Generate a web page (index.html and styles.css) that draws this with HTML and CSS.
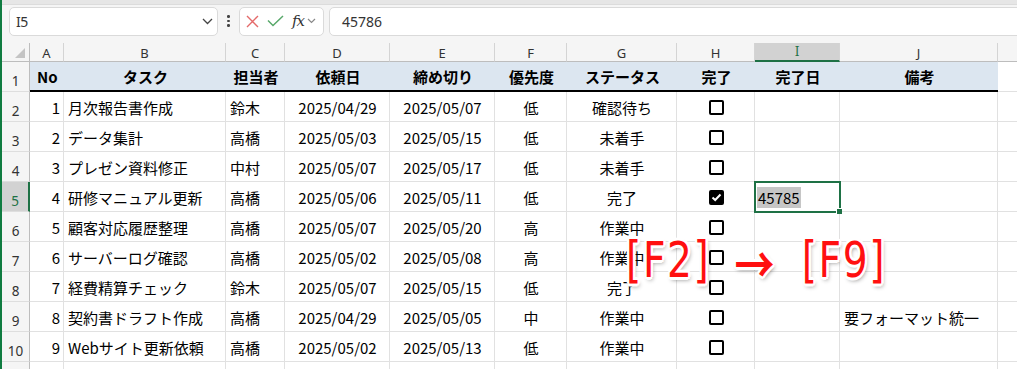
FILE: index.html
```html
<!DOCTYPE html>
<html lang="ja">
<head>
<meta charset="utf-8">
<link rel="stylesheet" href="styles.css">
</head>
<body>
<div class="app">
  <div class="ribbon-edge"></div>
  <div class="fbar">
    <div class="namebox"><span>I5</span>
      <svg class="chev" width="11" height="7" viewBox="0 0 11 7"><path d="M1 1 L5.5 5.5 L10 1" fill="none" stroke="#444" stroke-width="1.3"/></svg>
    </div>
    <div class="dots"><i></i><i></i><i></i></div>
    <div class="fbtns">
      <svg width="13" height="13" viewBox="0 0 13 13"><path d="M1 1 L12 12 M12 1 L1 12" stroke="#e46a6a" stroke-width="1.4" fill="none"/></svg>
      <svg width="17" height="12" viewBox="0 0 17 12"><path d="M1 5.5 L6 10.5 L16 1" stroke="#58a86a" stroke-width="1.5" fill="none"/></svg>
      <span class="fx">fx</span>
      <svg class="chev2" width="9" height="6" viewBox="0 0 9 6"><path d="M1 1 L4.5 4.5 L8 1" fill="none" stroke="#888" stroke-width="1.2"/></svg>
    </div>
    <div class="finput">45786</div>
  </div>

  <div class="sheet">
    <div class="ch corner"><span class="tri"></span></div>
    <div class="ch">A</div><div class="ch">B</div><div class="ch">C</div><div class="ch">D</div><div class="ch">E</div><div class="ch">F</div><div class="ch">G</div><div class="ch">H</div><div class="ch sel">I</div><div class="ch">J</div><div class="ch"></div>

    <div class="rh">1</div>
    <div class="c hd left">No</div><div class="c hd">タスク</div><div class="c hd">担当者</div><div class="c hd">依頼日</div><div class="c hd">締め切り</div><div class="c hd">優先度</div><div class="c hd">ステータス</div><div class="c hd">完了</div><div class="c hd">完了日</div><div class="c hd">備考</div><div class="c"></div>

    <div class="rh">2</div>
    <div class="c r">1</div><div class="c">月次報告書作成</div><div class="c">鈴木</div><div class="c m">2025/04/29</div><div class="c m">2025/05/07</div><div class="c m">低</div><div class="c m">確認待ち</div><div class="c m"><span class="cb"></span></div><div class="c"></div><div class="c"></div><div class="c"></div>

    <div class="rh">3</div>
    <div class="c r">2</div><div class="c">データ集計</div><div class="c">高橋</div><div class="c m">2025/05/03</div><div class="c m">2025/05/15</div><div class="c m">低</div><div class="c m">未着手</div><div class="c m"><span class="cb"></span></div><div class="c"></div><div class="c"></div><div class="c"></div>

    <div class="rh">4</div>
    <div class="c r">3</div><div class="c">プレゼン資料修正</div><div class="c">中村</div><div class="c m">2025/05/07</div><div class="c m">2025/05/17</div><div class="c m">低</div><div class="c m">未着手</div><div class="c m"><span class="cb"></span></div><div class="c"></div><div class="c"></div><div class="c"></div>

    <div class="rh sel">5</div>
    <div class="c r">4</div><div class="c">研修マニュアル更新</div><div class="c">高橋</div><div class="c m">2025/05/06</div><div class="c m">2025/05/11</div><div class="c m">低</div><div class="c m">完了</div><div class="c m"><span class="cb on"><svg width="11" height="9" viewBox="0 0 11 9"><path d="M1.5 4.5 L4.2 7 L9.5 1.5" fill="none" stroke="#fff" stroke-width="2"/></svg></span></div><div class="c active"><span class="hl">45785</span></div><div class="c"></div><div class="c"></div>

    <div class="rh">6</div>
    <div class="c r">5</div><div class="c">顧客対応履歴整理</div><div class="c">高橋</div><div class="c m">2025/05/07</div><div class="c m">2025/05/20</div><div class="c m">高</div><div class="c m">作業中</div><div class="c m"><span class="cb"></span></div><div class="c"></div><div class="c"></div><div class="c"></div>

    <div class="rh">7</div>
    <div class="c r">6</div><div class="c">サーバーログ確認</div><div class="c">高橋</div><div class="c m">2025/05/02</div><div class="c m">2025/05/08</div><div class="c m">高</div><div class="c m">作業中</div><div class="c m"><span class="cb"></span></div><div class="c"></div><div class="c"></div><div class="c"></div>

    <div class="rh">8</div>
    <div class="c r">7</div><div class="c">経費精算チェック</div><div class="c">鈴木</div><div class="c m">2025/05/07</div><div class="c m">2025/05/15</div><div class="c m">低</div><div class="c m">完了</div><div class="c m"><span class="cb"></span></div><div class="c"></div><div class="c"></div><div class="c"></div>

    <div class="rh">9</div>
    <div class="c r">8</div><div class="c">契約書ドラフト作成</div><div class="c">高橋</div><div class="c m">2025/04/29</div><div class="c m">2025/05/05</div><div class="c m">中</div><div class="c m">作業中</div><div class="c m"><span class="cb"></span></div><div class="c"></div><div class="c">要フォーマット統一</div><div class="c"></div>

    <div class="rh">10</div>
    <div class="c r">9</div><div class="c">Webサイト更新依頼</div><div class="c">高橋</div><div class="c m">2025/05/02</div><div class="c m">2025/05/13</div><div class="c m">低</div><div class="c m">作業中</div><div class="c m"><span class="cb"></span></div><div class="c"></div><div class="c"></div><div class="c"></div>

    <div class="rh"></div>
    <div class="c"></div><div class="c"></div><div class="c"></div><div class="c"></div><div class="c"></div><div class="c"></div><div class="c"></div><div class="c"></div><div class="c"></div><div class="c"></div><div class="c"></div>
  </div>

  <div class="callout"><span>[F2]</span><span class="arrow">→</span><span>[F9]</span></div>
</div>
</body>
</html>
```

FILE: styles.css
```css
* { box-sizing: border-box; }
html, body { margin: 0; padding: 0; }
body {
  width: 1017px;
  height: 369px;
  overflow: hidden;
  background: #fff;
  border-left: 2px solid #107c41;
  font-family: "Noto Sans CJK JP", sans-serif;
  color: #000;
}
.app { position: relative; height: 100%; overflow: hidden; }

.ribbon-edge { height: 5px; background: #e6e6e6; border-bottom: 1px solid #dcdcdc; }
.fbar {
  display: flex;
  align-items: center;
  height: 38px;
  padding: 1px 0 7px 7px;
  background: #f5f5f5;
}
.namebox {
  width: 209px;
  height: 29px;
  background: #fff;
  border: 1px solid #dadada;
  border-radius: 5px;
  display: flex;
  align-items: center;
  justify-content: space-between;
  padding: 0 4px 0 6px;
  font-family: "Noto Sans", sans-serif;
  font-size: 14px;
  color: #333;
}
.namebox span { letter-spacing: -0.5px; }
.dots {
  width: 21px;
  display: flex;
  flex-direction: column;
  align-items: center;
  gap: 2px;
}
.dots i { width: 2.5px; height: 2.5px; background: #444; border-radius: 50%; }
.fbtns {
  width: 85px;
  height: 29px;
  background: #fff;
  border: 1px solid #dadada;
  border-radius: 5px;
  display: flex;
  align-items: center;
  padding-left: 6px;
  gap: 8px;
}
.fbtns .fx {
  font-family: "DejaVu Serif", "Liberation Serif", serif;
  font-style: italic;
  font-size: 15px;
  color: #333;
  letter-spacing: -1px;
}
.fbtns .chev2 { margin-left: -5px; }
.finput {
  flex: 1;
  margin-left: 5px;
  margin-right: -10px;
  height: 29px;
  background: #fff;
  border: 1px solid #dadada;
  border-radius: 5px;
  display: flex;
  align-items: center;
  padding-left: 12px;
  font-family: "Noto Sans", sans-serif;
  font-size: 14px;
  color: #333;
}

.sheet {
  display: grid;
  grid-template-columns: 28px 34px 162px 59px 105px 105px 72px 110px 78px 85px 158px 40px;
  grid-template-rows: 19px 30px repeat(9, 30px) 30px;
}
.ch {
  background: #f5f5f5;
  border-right: 1px solid #d4d4d4;
  border-bottom: 1px solid #bdbdbd;
  font-family: "Noto Sans", sans-serif;
  font-size: 13px;
  color: #333;
  display: flex;
  align-items: flex-end;
  justify-content: center;
  line-height: 16px;
}
.ch.corner { position: relative; border-right: 1px solid #bdbdbd; }
.ch.corner .tri {
  position: absolute;
  right: 4px;
  bottom: 3px;
  width: 0; height: 0;
  border-left: 10px solid transparent;
  border-bottom: 10px solid #c4c4c4;
}
.ch.sel {
  background: #d2d2d2;
  border-bottom: 2px solid #1e7145;
  color: #1e7145;
  font-family: "DejaVu Serif", serif;
  font-size: 12px;
}
.rh {
  background: #f5f5f5;
  border-right: 1px solid #bdbdbd;
  border-bottom: 1px solid #dedede;
  font-family: "Noto Sans", sans-serif;
  font-size: 13.5px;
  color: #333;
  display: flex;
  align-items: flex-end;
  justify-content: center;
  padding-bottom: 1px;
  line-height: 18px;
}
.rh.sel {
  background: #d2d2d2;
  border-right: 2px solid #1e7145;
  color: #1e7145;
}
.c {
  border-right: 1px solid #e1e1e1;
  border-bottom: 1px solid #e1e1e1;
  font-size: 15px;
  display: flex;
  align-items: center;
  padding: 1px 3px 0 4px;
  white-space: nowrap;
}
.c.r { justify-content: flex-end; padding-right: 3px; }
.c.m { justify-content: center; }
.c.hd {
  background: #dce6f0;
  border-right: none;
  border-bottom: 2px solid #000;
  font-weight: bold;
  justify-content: center;
  padding-top: 0;
}
.c.hd.left { justify-content: flex-start; padding-left: 7px; }
.cb {
  width: 15px;
  height: 15px;
  border: 2px solid #000;
  border-radius: 2px;
  display: inline-flex;
  align-items: center;
  justify-content: center;
}
.cb.on { background: #000; }
.c.active {
  position: relative;
  outline: 2px solid #1e7145;
  outline-offset: -1px;
  z-index: 2;
  padding-left: 2px;
}
.c.active::after {
  content: "";
  position: absolute;
  right: -3px;
  bottom: -3px;
  width: 5px;
  height: 5px;
  background: #1e7145;
  border: 1px solid #fff;
  border-right: none;
  border-bottom: none;
}
.hl { background: #c6c6c6; line-height: 21px; padding: 0 1px; }

.callout {
  position: absolute;
  left: 624px;
  top: 232px;
  display: flex;
  align-items: center;
  font-family: "DejaVu Sans", sans-serif;
  font-size: 49px;
  line-height: 58px;
  color: #ff1010;
  z-index: 5;
  transform: scaleX(0.8);
  transform-origin: left top;
  letter-spacing: 2px;
  text-shadow:
    3px 0 0 #fff, -3px 0 0 #fff, 0 3px 0 #fff, 0 -3px 0 #fff,
    2px 2px 0 #fff, -2px 2px 0 #fff, 2px -2px 0 #fff, -2px -2px 0 #fff,
    2px 3px 5px rgba(0,0,0,0.45);
}
.callout .arrow {
  font-family: "Noto Sans CJK JP", sans-serif;
  font-size: 50px;
  font-weight: bold;
  margin: 0 34px 0 30px;
  letter-spacing: 0;
}
```
